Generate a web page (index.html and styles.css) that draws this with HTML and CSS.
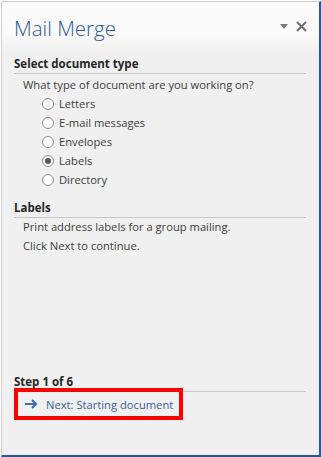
FILE: index.html
```html
<!DOCTYPE html>
<html lang="en">
<head>
    <meta charset="UTF-8">
    <title>Mail Merge</title>
    <link rel="stylesheet" href="styles.css">
</head>
<body>
    <div class="pane">
        <div class="pane-header">
            <h1 class="pane-title">Mail Merge</h1>
            <div class="pane-controls">
                <svg class="ctl-menu" width="8" height="5" viewBox="0 0 8 5"><path d="M0 0 H8 L4 5 Z" fill="#7a7a7a"/></svg>
                <svg class="ctl-close" width="11" height="11" viewBox="0 0 11 11"><path d="M1 1 L10 10 M10 1 L1 10" stroke="#6e6e6e" stroke-width="2"/></svg>
            </div>
        </div>

        <div class="pane-body">
            <section class="group">
                <h2 class="group-title">Select document type</h2>
                <p class="group-text">What type of document are you working on?</p>
                <ul class="radio-list">
                    <li class="radio"><span class="radio-dot"></span>Letters</li>
                    <li class="radio"><span class="radio-dot"></span>E-mail messages</li>
                    <li class="radio"><span class="radio-dot"></span>Envelopes</li>
                    <li class="radio checked"><span class="radio-dot"></span>Labels</li>
                    <li class="radio"><span class="radio-dot"></span>Directory</li>
                </ul>
            </section>

            <section class="group labels">
                <h2 class="group-title">Labels</h2>
                <p class="group-text">Print address labels for a group mailing.</p>
                <p class="group-text">Click Next to continue.</p>
            </section>

            <div class="spacer"></div>

            <section class="group step">
                <h2 class="group-title">Step 1 of 6</h2>
                <a class="next-link" href="#">
                    <svg width="13" height="10" viewBox="0 0 13 10"><path d="M0 5 H11 M7 1 L11 5 L7 9" stroke="#3e6db0" stroke-width="2.2" fill="none"/></svg>
                    <span>Next: Starting document</span>
                </a>
            </section>
        </div>
    </div>
</body>
</html>
```

FILE: styles.css
```css
* {
    margin: 0;
    padding: 0;
    box-sizing: border-box;
}

body {
    font-family: "Open Sans", "Noto Sans", sans-serif;
    font-size: 11.2px;
    color: #3c3c3c;
    background: #ffffff;
    padding: 1px 0 0 1px;
}

.pane {
    width: 320px;
    height: 456px;
    display: flex;
    flex-direction: column;
    border-top: 1px solid #cfcfcf;
    border-left: 1px solid #cfcfcf;
    border-right: 2px solid #2b579a;
    border-bottom: 2px solid #2b579a;
    background: linear-gradient(180deg, #fcfcfc 0px, #fafafa 32px, #f0f0f0 52px, #f0f0f0 100%);
}

.pane-header {
    display: flex;
    align-items: flex-start;
    justify-content: space-between;
    padding: 11px 12px 0 12px;
}

.pane-title {
    font-size: 20.5px;
    font-weight: 300;
    line-height: 30px;
    color: #2b579a;
}

.pane-controls {
    display: flex;
    align-items: center;
    gap: 8px;
    padding-top: 8px;
}

.pane-body {
    flex: 1;
    display: flex;
    flex-direction: column;
    padding: 13px 13px 35px 12px;
}

.group-title {
    font-size: 11.5px;
    font-weight: 700;
    line-height: 16px;
    color: #262626;
    padding-bottom: 1px;
    border-bottom: 1px solid #c6c6c6;
}

.group-text {
    line-height: 19px;
    padding-left: 9px;
}

.group > .group-title + .group-text {
    margin-top: 1px;
}

.labels {
    margin-top: 11px;
}

.labels .group-title + .group-text {
    margin-top: -1px;
}

.radio-list {
    list-style: none;
    padding-left: 28px;
}

.radio {
    display: flex;
    align-items: center;
    gap: 5px;
    line-height: 19px;
}

.radio-dot {
    width: 12px;
    height: 12px;
    border-radius: 50%;
    border: 1px solid #8c8c8c;
    background: #ffffff;
    display: flex;
    align-items: center;
    justify-content: center;
}

.radio.checked .radio-dot::after {
    content: '';
    width: 6px;
    height: 6px;
    border-radius: 50%;
    background: #5a5a5a;
}

.spacer {
    flex: 1;
}

.next-link {
    display: flex;
    align-items: center;
    gap: 8px;
    align-self: flex-start;
    width: 169px;
    height: 32px;
    margin-top: -4px;
    padding: 0 0 0 7px;
    border: 4px solid #ff0000;
    color: #3b5f98;
    text-decoration: none;
    white-space: nowrap;
}
```
